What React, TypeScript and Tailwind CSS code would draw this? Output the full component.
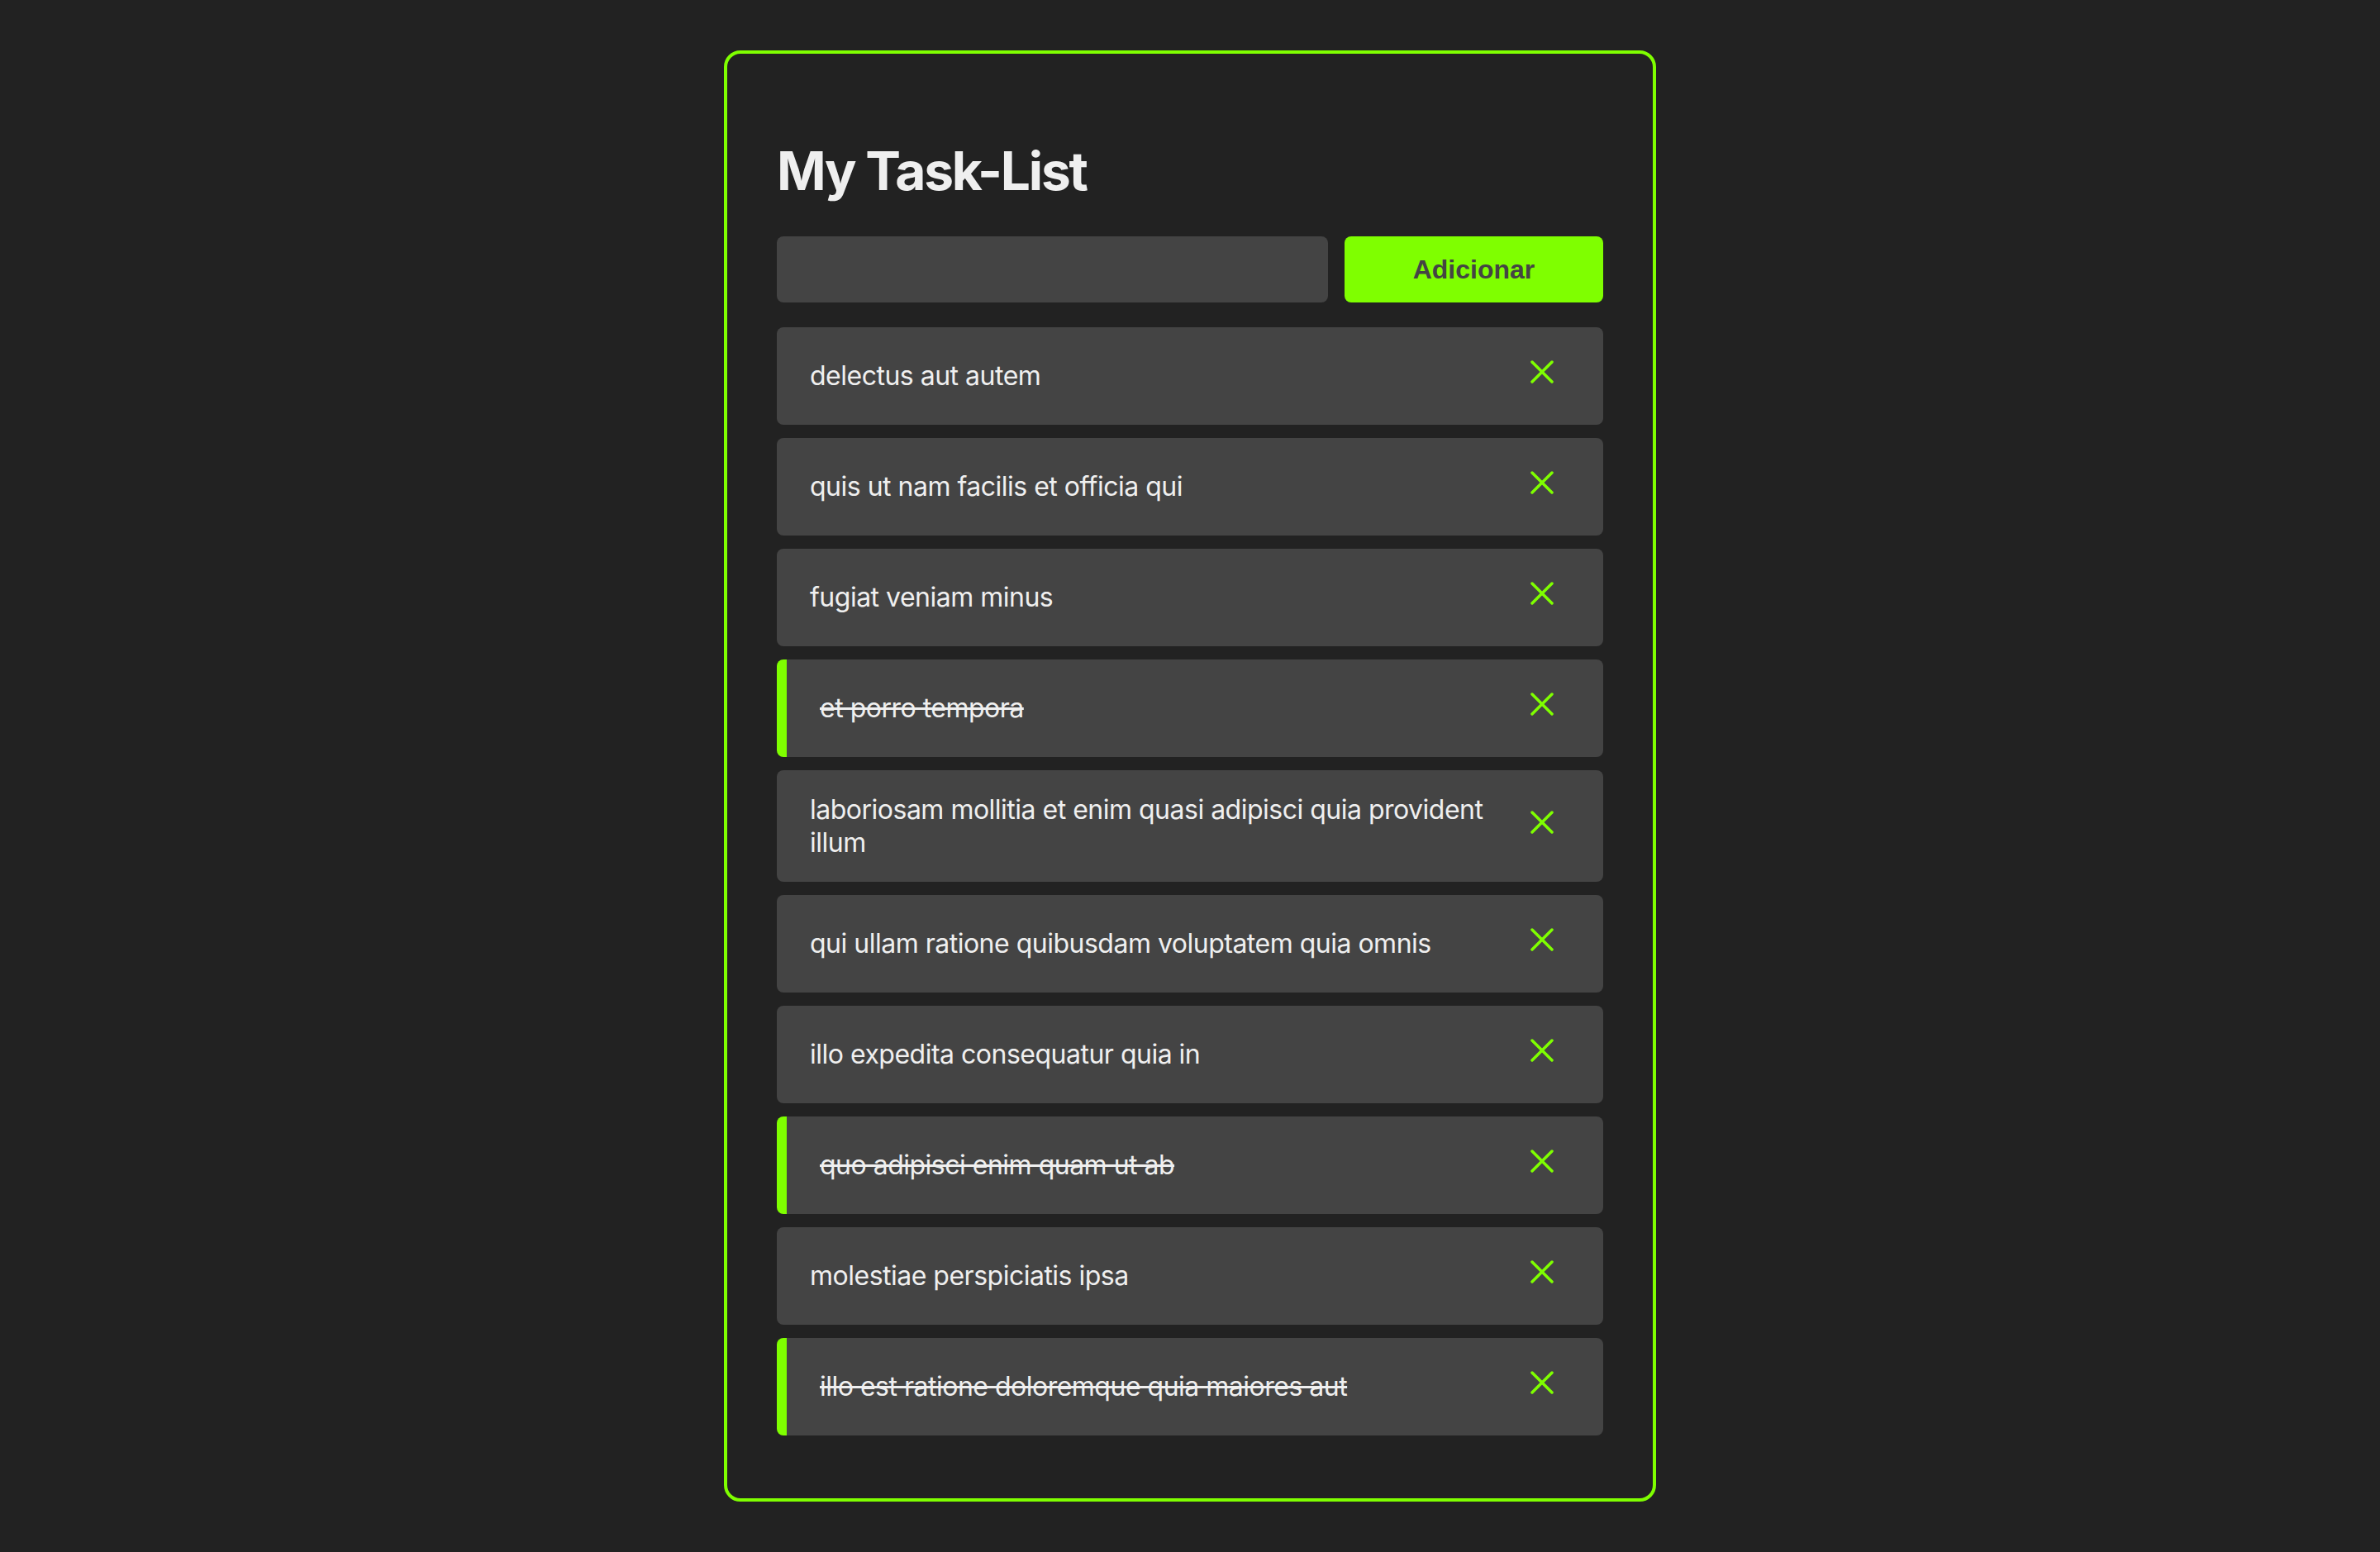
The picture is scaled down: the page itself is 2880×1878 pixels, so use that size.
import { useState } from "react";

type Task = { id: number; title: string; done: boolean };

const initial: Task[] = [
  { id: 1, title: "delectus aut autem", done: false },
  { id: 2, title: "quis ut nam facilis et officia qui", done: false },
  { id: 3, title: "fugiat veniam minus", done: false },
  { id: 4, title: "et porro tempora", done: true },
  { id: 5, title: "laboriosam mollitia et enim quasi adipisci quia provident illum", done: false },
  { id: 6, title: "qui ullam ratione quibusdam voluptatem quia omnis", done: false },
  { id: 7, title: "illo expedita consequatur quia in", done: false },
  { id: 8, title: "quo adipisci enim quam ut ab", done: true },
  { id: 9, title: "molestiae perspiciatis ipsa", done: false },
  { id: 10, title: "illo est ratione doloremque quia maiores aut", done: true },
];

function XIcon() {
  return (
    <svg width="28" height="28" viewBox="0 0 28 28" fill="none" stroke="#7fff00" strokeWidth="3.5" strokeLinecap="round">
      <path d="M2 2 26 26" />
      <path d="M26 2 2 26" />
    </svg>
  );
}

export default function App() {
  const [tasks, setTasks] = useState<Task[]>(initial);
  const [text, setText] = useState("");

  function add() {
    if (!text.trim()) return;
    setTasks([...tasks, { id: Date.now(), title: text.trim(), done: false }]);
    setText("");
  }

  return (
    <div className="min-h-screen bg-[#222222] pt-[61px] pb-[61px] font-['Inter',sans-serif]">
      <div className="mx-auto w-[1128px] rounded-[20px] border-4 border-[#7fff00] px-[60px] pt-[60px] pb-[60px]">
        <h1 className="mt-[43px] mb-[41px] text-[64px] font-bold leading-[77px] tracking-[-2.2px] text-[#efefef]">My Task-List</h1>
        <div className="mb-[30px] flex gap-[20px]">
          <input
            value={text}
            onChange={(e) => setText(e.target.value)}
            className="h-[80px] flex-1 rounded-[8px] bg-[#444444] px-[24px] text-[32px] text-[#efefef] outline-none"
          />
          <button
            onClick={add}
            className="h-[80px] w-[313px] rounded-[8px] bg-[#7fff00] font-['Liberation_Sans',Arial,sans-serif] text-[32px] font-bold text-[#444444]"
          >
            Adicionar
          </button>
        </div>
        <ul>
          {tasks.map((t) => (
            <li
              key={t.id}
              onClick={() => setTasks(tasks.map((x) => (x.id === t.id ? { ...x, done: !x.done } : x)))}
              className={
                t.done
                  ? "mb-[16px] flex items-center rounded-[8px] border-l-[12px] border-[#7fff00] bg-[#444444] py-[28px] pl-[40px] pr-[43px]"
                  : "mb-[16px] flex items-center rounded-[8px] bg-[#444444] py-[28px] pl-[40px] pr-[43px]"
              }
            >
              <span
                className={
                  t.done
                    ? "flex-1 text-[32px] leading-[39.5px] tracking-[-0.5px] text-[#efefef] line-through decoration-[3px]"
                    : "flex-1 text-[32px] leading-[39.5px] tracking-[-0.5px] text-[#efefef]"
                }
              >
                {t.title}
              </span>
              <button
                onClick={(e) => {
                  e.stopPropagation();
                  setTasks(tasks.filter((x) => x.id !== t.id));
                }}
                className="flex h-[62px] w-[62px] items-center justify-center pb-[10px]"
              >
                <XIcon />
              </button>
            </li>
          ))}
        </ul>
      </div>
    </div>
  );
}
